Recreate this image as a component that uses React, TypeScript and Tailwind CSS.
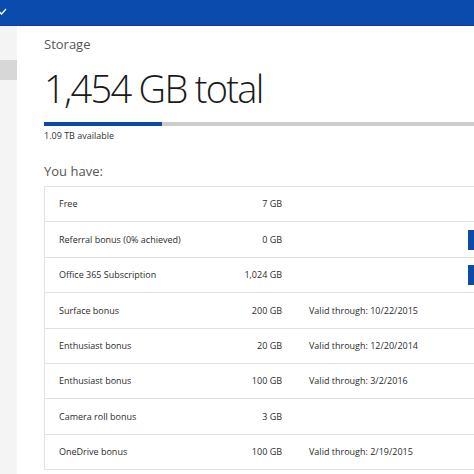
import React from 'react';

const rows: { label: string; size: string; note?: string; action?: boolean }[] = [
  { label: 'Free', size: '7 GB' },
  { label: 'Referral bonus (0% achieved)', size: '0 GB', action: true },
  { label: 'Office 365 Subscription', size: '1,024 GB', action: true },
  { label: 'Surface bonus', size: '200 GB', note: 'Valid through: 10/22/2015' },
  { label: 'Enthusiast bonus', size: '20 GB', note: 'Valid through: 12/20/2014' },
  { label: 'Enthusiast bonus', size: '100 GB', note: 'Valid through: 3/2/2016' },
  { label: 'Camera roll bonus', size: '3 GB' },
  { label: 'OneDrive bonus', size: '100 GB', note: 'Valid through: 2/19/2015' },
];

export default function App() {
  return (
    <div className="w-[474px] h-[474px] overflow-hidden bg-white flex flex-col text-[#333]" style={{ fontFamily: '"Open Sans", "Noto Sans", sans-serif' }}>
      {/* top bar */}
      <div className="h-[26px] flex-none bg-[#0b4bae] border-b border-[#0a3f94] flex items-center">
        <svg className="-ml-[2px] mb-[2px]" width="9" height="7" viewBox="0 0 9 7" fill="none">
          <path d="M1 3.5 L3.5 6 L8 1" stroke="white" strokeWidth="1.4" />
        </svg>
      </div>

      <div className="flex flex-1 min-h-0">
        {/* sidebar */}
        <div className="w-[17px] flex-none bg-[#f4f4f4] flex flex-col">
          <div className="mt-[34px] h-[20px] bg-[#d7d7d7]" />
        </div>

        <main className="flex-1 pl-[27px] flex flex-col">
          <div className="mt-[9px] h-[18px] text-[13px] leading-[18px] text-[#555]">Storage</div>
          <div className="mt-[15px] h-[40px] text-[38px] leading-[40px] font-light text-[#1a1a1a] tracking-[-1.7px]">1,454 GB total</div>
          <div className="mt-[14px] h-[4px] flex bg-[#cccccc]">
            <div className="w-[118px] bg-[#0b4aa8]" />
          </div>
          <div className="mt-[4px] h-[12px] text-[9px] leading-[12px] text-[#333]">1.09 TB available</div>
          <div className="mt-[19.5px] h-[18px] text-[13px] leading-[18px] text-[#555]">You have:</div>

          <div className="mt-[6.5px] w-[460px] border-l border-t border-[#e1e1e1]">
            {rows.map((r, i) => (
              <div key={i} className="h-[35.4px] border-b border-[#e1e1e1] flex items-center pl-[14px] text-[9px] text-[#2b2b2b]">
                <div className="w-[163px] flex-none">{r.label}</div>
                <div className="w-[60px] flex-none text-right">{r.size}</div>
                <div className="w-[186px] flex-none pl-[27px]">{r.note}</div>
                {r.action && <div className="w-[60px] h-[20px] bg-[#0b4aa8] flex-none" />}
              </div>
            ))}
          </div>
        </main>
      </div>
    </div>
  );
}
